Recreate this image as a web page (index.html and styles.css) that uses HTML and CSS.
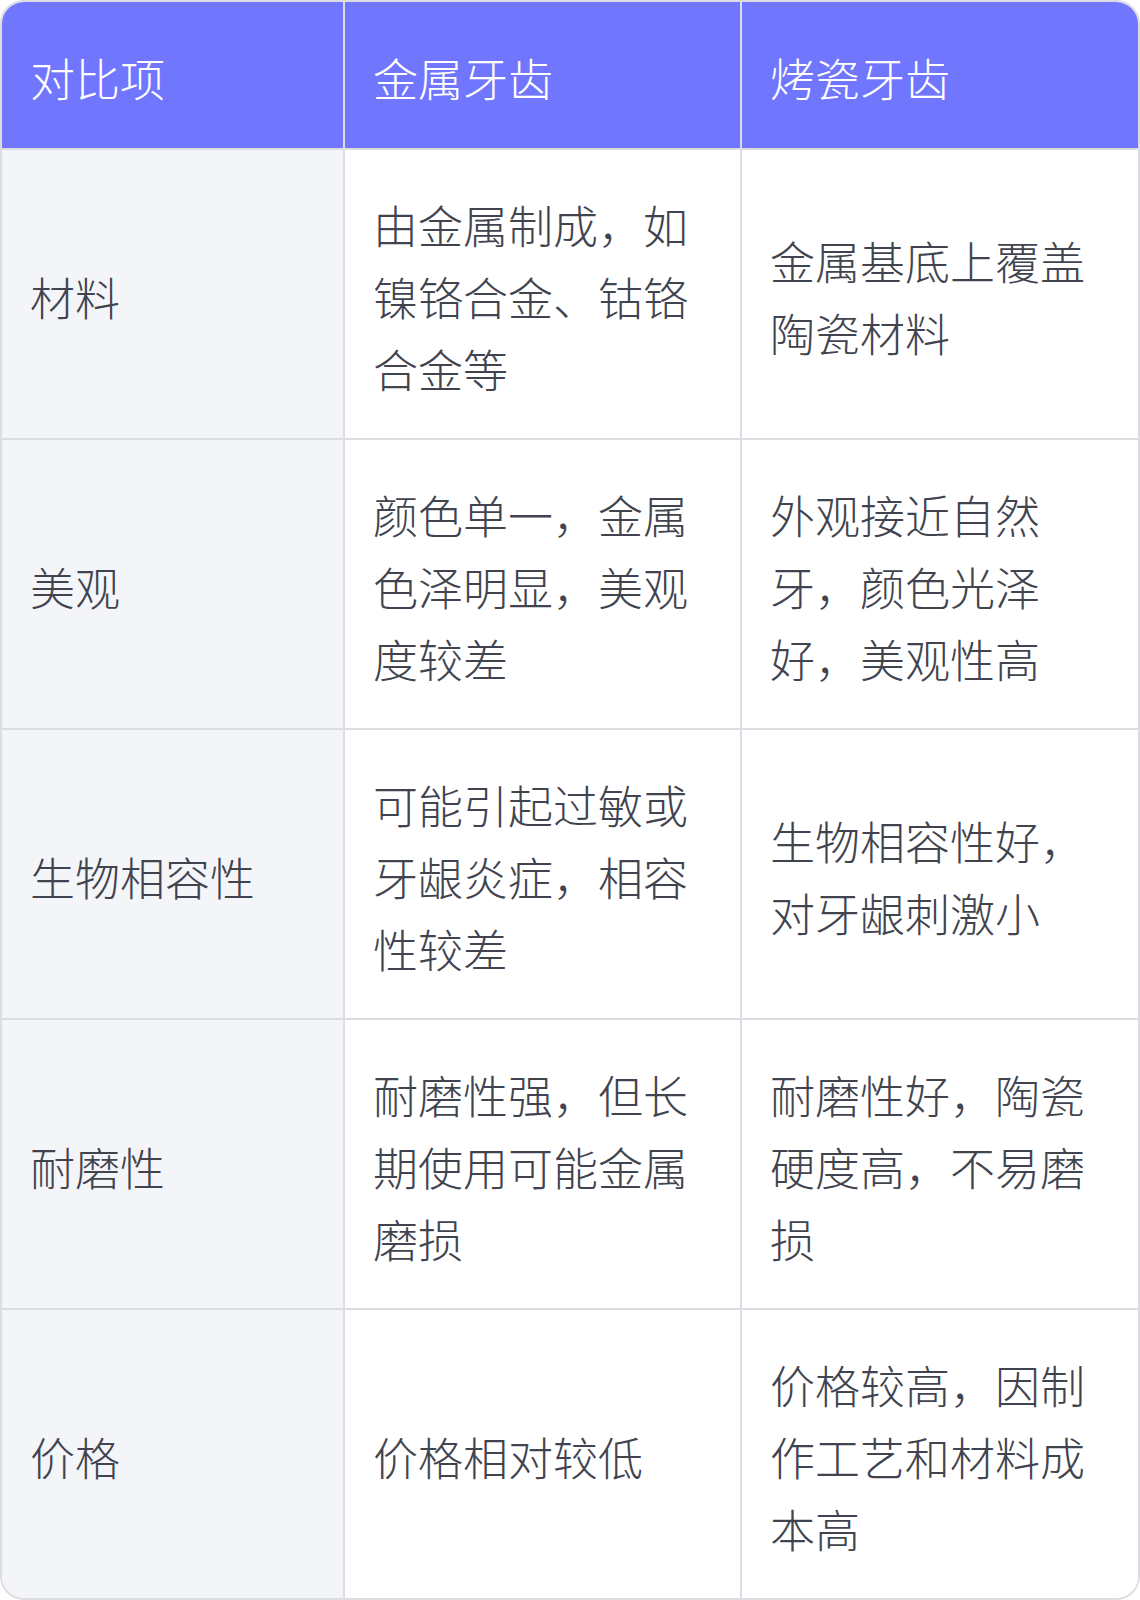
FILE: index.html
```html
<!DOCTYPE html>
<html lang="zh-CN">
<head>
<meta charset="utf-8">
<title>金属牙齿与烤瓷牙齿对比</title>
<link rel="stylesheet" href="styles.css">
</head>
<body>
<table class="compare">
  <colgroup>
    <col class="col-item">
    <col class="col-a">
    <col class="col-b">
  </colgroup>
  <thead>
    <tr>
      <th>对比项</th>
      <th>金属牙齿</th>
      <th>烤瓷牙齿</th>
    </tr>
  </thead>
  <tbody>
    <tr>
      <td class="label">材料</td>
      <td>由金属制成，如镍铬合金、钴铬合金等</td>
      <td>金属基底上覆盖陶瓷材料</td>
    </tr>
    <tr>
      <td class="label">美观</td>
      <td>颜色单一，金属色泽明显，美观度较差</td>
      <td>外观接近自然牙，颜色光泽好，美观性高</td>
    </tr>
    <tr>
      <td class="label">生物相容性</td>
      <td>可能引起过敏或牙龈炎症，相容性较差</td>
      <td>生物相容性好，对牙龈刺激小</td>
    </tr>
    <tr>
      <td class="label">耐磨性</td>
      <td>耐磨性强，但长期使用可能金属磨损</td>
      <td>耐磨性好，陶瓷硬度高，不易磨损</td>
    </tr>
    <tr>
      <td class="label">价格</td>
      <td>价格相对较低</td>
      <td>价格较高，因制作工艺和材料成本高</td>
    </tr>
  </tbody>
</table>
</body>
</html>
```

FILE: styles.css
```css
html, body {
  margin: 0;
  padding: 0;
  background: #ffffff;
}

.compare {
  width: 1140px;
  table-layout: fixed;
  border-collapse: separate;
  border-spacing: 0;
  border: 2px solid #dcdde2;
  border-radius: 24px;
  overflow: hidden;
  font-family: "Noto Sans CJK SC", "Noto Sans", sans-serif;
  font-size: 45px;
  font-weight: 300;
  line-height: 72px;
  color: #41444f;
}

.col-item { width: 343px; }
.col-a { width: 397px; }
.col-b { width: 396px; }

.compare th,
.compare td {
  padding: 39px 28px 33px;
  text-align: left;
  vertical-align: middle;
  border-right: 2px solid #dcdde2;
  border-bottom: 2px solid #dcdde2;
  font-weight: 300;
}

.compare th:last-child,
.compare td:last-child {
  border-right: none;
}

.compare tbody tr:last-child td {
  border-bottom: none;
}

.compare th {
  padding-top: 40px;
  padding-bottom: 34px;
  background: #7176ff;
  color: #ffffff;
}

.compare td {
  background: #ffffff;
}

.compare td.label {
  background: #f4f5f9;
}
```
